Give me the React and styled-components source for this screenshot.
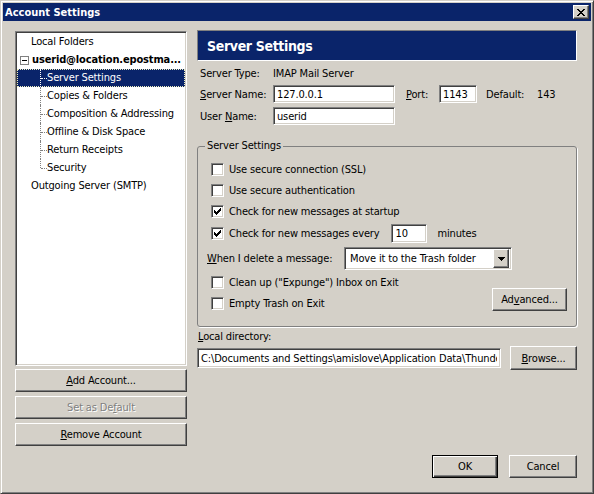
import React from "react";
import styled, { createGlobalStyle, css } from "styled-components";

const GlobalStyle = createGlobalStyle`
  html, body {
    margin: 0;
    padding: 0;
    background: #d4d0c8;
  }
  body {
    font-family: "DejaVu Sans Condensed", "Liberation Sans", Arial, sans-serif;
    font-size: 11px;
    letter-spacing: -0.15px;
    color: #000;
  }
  * {
    box-sizing: border-box;
  }
`;

const NAVY = "#0a246a";

const raised = css`
  border: 1px solid;
  border-color: #fff #404040 #404040 #fff;
  box-shadow: inset -1px -1px #808080, inset 1px 1px #d4d0c8;
`;

const sunken = css`
  border: 1px solid;
  border-color: #808080 #fff #fff #808080;
  box-shadow: inset 1px 1px #404040, inset -1px -1px #d4d0c8;
`;

const Window = styled.div`
  width: 594px;
  height: 494px;
  display: flex;
  flex-direction: column;
  background: #d4d0c8;
  border: 1px solid;
  border-color: #d4d0c8 #404040 #404040 #d4d0c8;
  box-shadow: inset 1px 1px #fff, inset -1px -1px #808080;
  padding: 2px;
`;

const TitleBar = styled.div`
  height: 18px;
  flex-shrink: 0;
  display: flex;
  align-items: center;
  justify-content: space-between;
  padding: 0 2px;
  background: ${NAVY};
  color: #fff;
  font-weight: bold;
  letter-spacing: 0;
`;

const CloseButton = styled.div`
  width: 16px;
  height: 14px;
  display: flex;
  align-items: center;
  justify-content: center;
  background: #d4d0c8;
  ${raised};
`;

const Body = styled.div`
  flex: 1;
  display: flex;
  padding: 9px 14px 13px 12px;
`;

const LeftColumn = styled.div`
  width: 172px;
  display: flex;
  flex-direction: column;
`;

const Tree = styled.div`
  height: 335px;
  margin-top: 1px;
  background: #fff;
  padding: 1px;
  ${sunken};
`;

const TreeRow = styled.div`
  position: relative;
  height: 18px;
  line-height: 18px;
  white-space: nowrap;
  overflow: hidden;
  display: flex;
  align-items: center;
  padding-left: ${(p) => p.indent}px;
  font-weight: ${(p) => (p.bold ? "bold" : "normal")};
  background: ${(p) => (p.selected ? NAVY : "transparent")};
  color: ${(p) => (p.selected ? "#fff" : "#000")};
  outline: ${(p) => (p.selected ? "1px dotted #f0f0c0" : "none")};
  outline-offset: -1px;
`;

const ChildRow = styled(TreeRow)`
  &::before {
    content: "";
    position: absolute;
    left: 23px;
    top: 0;
    height: ${(p) => (p.last ? "9px" : "18px")};
    border-left: 1px dotted ${(p) => (p.selected ? "#fff" : "#808080")};
  }
  &::after {
    content: "";
    position: absolute;
    left: 24px;
    top: 9px;
    width: 6px;
    border-top: 1px dotted ${(p) => (p.selected ? "#fff" : "#808080")};
  }
`;

const Expander = styled.span`
  width: 9px;
  height: 9px;
  margin-right: 3px;
  border: 1px solid #808080;
  background: #fff;
  display: flex;
  align-items: center;
  justify-content: center;
  flex-shrink: 0;

  &::before {
    content: "";
    width: 5px;
    height: 1px;
    background: #000;
  }
`;

const Button = styled.div`
  height: ${(p) => p.h || 23}px;
  width: ${(p) => (p.w ? `${p.w}px` : "auto")};
  display: flex;
  align-items: center;
  justify-content: center;
  background: #d4d0c8;
  color: ${(p) => (p.disabled ? "#808080" : "#000")};
  text-shadow: ${(p) => (p.disabled ? "1px 1px 0 #fff" : "none")};
  ${raised};
  ${(p) =>
    p.primary &&
    css`
      border: 1px solid #000;
      box-shadow: inset 1px 1px #fff, inset -1px -1px #404040,
        inset -2px -2px #808080;
    `}
`;

const SideButton = styled(Button)`
  margin-top: ${(p) => p.gap}px;
`;

const Key = styled.span`
  text-decoration: underline;
  text-underline-offset: 1px;
`;

const RightColumn = styled.div`
  flex: 1;
  margin-left: 10px;
  display: flex;
  flex-direction: column;
`;

const Header = styled.div`
  height: 31px;
  display: flex;
  align-items: center;
  padding-left: 9px;
  background: ${NAVY};
  border: 1px solid;
  border-color: #808080 #fff #fff #808080;
  color: #fff;
  font-size: 14px;
  font-weight: bold;
  letter-spacing: -0.35px;
`;

const InfoRow = styled.div`
  height: 18px;
  margin-top: ${(p) => p.gap}px;
  display: flex;
  align-items: center;
`;

const Label = styled.span`
  width: ${(p) => (p.w ? `${p.w}px` : "auto")};
  margin-left: ${(p) => p.ml || 0}px;
  flex-shrink: 0;
  white-space: nowrap;
`;

const Field = styled.input`
  width: ${(p) => p.w}px;
  height: ${(p) => p.h || 18}px;
  margin-left: ${(p) => p.ml || 0}px;
  padding: 0 3px;
  font: inherit;
  letter-spacing: inherit;
  color: #000;
  background: #fff;
  outline: none;
  flex-shrink: 0;
  ${sunken};
`;

const Group = styled.fieldset`
  margin: 14px 0 0;
  padding: 6px 9px 12px 13px;
  border: 1px solid #808080;
  border-radius: 3px;
  box-shadow: 1px 1px 0 #fff;
  min-width: 0;
`;

const Legend = styled.legend`
  padding: 0 2px;
  margin-left: -6px;
  line-height: 14px;
`;

const CheckRow = styled.div`
  height: ${(p) => p.h || 21}px;
  display: flex;
  align-items: center;
  white-space: nowrap;
`;

const Box = styled.span`
  width: 13px;
  height: 13px;
  margin-right: 5px;
  background: #fff;
  display: flex;
  align-items: center;
  justify-content: center;
  flex-shrink: 0;
  ${sunken};
`;

const SelectRow = styled.div`
  height: 23px;
  margin: 2px 0 0 -4px;
  display: flex;
  align-items: center;
`;

const Select = styled.div`
  width: 168px;
  height: 23px;
  display: flex;
  align-items: center;
  justify-content: space-between;
  padding: 2px;
  padding-left: 5px;
  background: #fff;
  ${sunken};
`;

const DropButton = styled.div`
  width: 16px;
  height: 19px;
  display: flex;
  align-items: center;
  justify-content: center;
  background: #d4d0c8;
  ${raised};
`;

const BottomBlock = styled.div`
  margin-top: 2px;
  display: flex;
  align-items: flex-end;
`;

const CheckColumn = styled.div`
  display: flex;
  flex-direction: column;
`;

const AdvancedButton = styled(Button)`
  margin-left: auto;
  margin-bottom: 3px;
`;

const DirLabel = styled.div`
  height: 14px;
  line-height: 14px;
  margin-top: 3px;
  padding-left: 1px;
`;

const DirRow = styled.div`
  height: 24px;
  margin-top: 2px;
  display: flex;
  align-items: center;
  justify-content: space-between;
`;

const Footer = styled.div`
  margin-top: auto;
  display: flex;
  justify-content: flex-end;
  gap: 11px;
`;

const CheckMark = () => (
  <svg width="7" height="7" viewBox="0 0 7 7" shapeRendering="crispEdges">
    <g fill="#000">
      <rect x="6" y="0" width="1" height="1" />
      <rect x="5" y="1" width="2" height="1" />
      <rect x="0" y="2" width="1" height="1" />
      <rect x="4" y="2" width="3" height="1" />
      <rect x="0" y="3" width="2" height="1" />
      <rect x="3" y="3" width="3" height="1" />
      <rect x="0" y="4" width="5" height="1" />
      <rect x="1" y="5" width="3" height="1" />
      <rect x="2" y="6" width="1" height="1" />
    </g>
  </svg>
);

const CloseIcon = () => (
  <svg width="8" height="7" viewBox="0 0 8 7" shapeRendering="crispEdges">
    <g fill="#000">
      <rect x="0" y="0" width="2" height="1" />
      <rect x="6" y="0" width="2" height="1" />
      <rect x="1" y="1" width="2" height="1" />
      <rect x="5" y="1" width="2" height="1" />
      <rect x="2" y="2" width="4" height="1" />
      <rect x="3" y="3" width="2" height="1" />
      <rect x="2" y="4" width="4" height="1" />
      <rect x="1" y="5" width="2" height="1" />
      <rect x="5" y="5" width="2" height="1" />
      <rect x="0" y="6" width="2" height="1" />
      <rect x="6" y="6" width="2" height="1" />
    </g>
  </svg>
);

const ArrowDown = () => (
  <svg width="7" height="4" viewBox="0 0 7 4" shapeRendering="crispEdges">
    <path d="M0 0h7v1h-1v1h-1v1h-1v1h-1v-1h-1v-1h-1v-1h-1z" fill="#000" />
  </svg>
);

const Check = ({ checked, children, h }) => (
  <CheckRow h={h}>
    <Box>{checked && <CheckMark />}</Box>
    {children}
  </CheckRow>
);

const children = [
  "Server Settings",
  "Copies & Folders",
  "Composition & Addressing",
  "Offline & Disk Space",
  "Return Receipts",
  "Security",
];

const App = () => {
  return (
    <>
      <GlobalStyle />
      <Window>
        <TitleBar>
          <span>Account Settings</span>
          <CloseButton>
            <CloseIcon />
          </CloseButton>
        </TitleBar>

        <Body>
          <LeftColumn>
            <Tree>
              <TreeRow indent={14}>Local Folders</TreeRow>
              <TreeRow indent={3} bold>
                <Expander />
                userid@location.epostma...
              </TreeRow>
              {children.map((name, i) => (
                <ChildRow
                  key={name}
                  indent={30}
                  selected={i === 0}
                  last={i === children.length - 1}
                >
                  {name}
                </ChildRow>
              ))}
              <TreeRow indent={14}>Outgoing Server (SMTP)</TreeRow>
            </Tree>
            <SideButton gap={3}>
              <span>
                <Key>A</Key>dd Account...
              </span>
            </SideButton>
            <SideButton gap={4} disabled>
              <span>
                Set as De<Key>f</Key>ault
              </span>
            </SideButton>
            <SideButton gap={4}>
              <span>
                <Key>R</Key>emove Account
              </span>
            </SideButton>
          </LeftColumn>

          <RightColumn>
            <Header>Server Settings</Header>

            <InfoRow gap={3}>
              <Label w={76}>&nbsp;Server Type:</Label>
              <span>IMAP Mail Server</span>
            </InfoRow>
            <InfoRow gap={3}>
              <Label w={76}>
                &nbsp;<Key>S</Key>erver Name:
              </Label>
              <Field w={122} defaultValue="127.0.0.1" readOnly />
              <Label w={33} ml={11}>
                <Key>P</Key>ort:
              </Label>
              <Field w={38} defaultValue="1143" readOnly />
              <Label w={51} ml={9}>
                Default:
              </Label>
              <span>143</span>
            </InfoRow>
            <InfoRow gap={4}>
              <Label w={76}>
                &nbsp;User <Key>N</Key>ame:
              </Label>
              <Field w={122} defaultValue="userid" readOnly />
            </InfoRow>

            <Group>
              <Legend>Server Settings</Legend>
              <Check>Use secure connection (SSL)</Check>
              <Check>Use secure authentication</Check>
              <Check checked>Check for new messages at startup</Check>
              <Check checked h={23}>
                Check for new messages every
                <Field w={36} h={19} ml={12} defaultValue="10" readOnly />
                <Label ml={10}>minutes</Label>
              </Check>
              <SelectRow>
                <Label w={137}>
                  <Key>W</Key>hen I delete a message:
                </Label>
                <Select>
                  <span>Move it to the Trash folder</span>
                  <DropButton>
                    <ArrowDown />
                  </DropButton>
                </Select>
              </SelectRow>
              <BottomBlock>
                <CheckColumn>
                  <Check>Clean up ("Expunge") Inbox on Exit</Check>
                  <Check>Empty Trash on Exit</Check>
                </CheckColumn>
                <AdvancedButton w={75}>
                  <span>
                    Ad<Key>v</Key>anced...
                  </span>
                </AdvancedButton>
              </BottomBlock>
            </Group>

            <DirLabel>
              <Key>L</Key>ocal directory:
            </DirLabel>
            <DirRow>
              <Field
                w={304}
                h={20}
                defaultValue={
                  "C:\\Documents and Settings\\amislove\\Application Data\\Thunderbird\\Profiles"
                }
                readOnly
              />
              <Button w={67} h={24}>
                <span>
                  <Key>B</Key>rowse...
                </span>
              </Button>
            </DirRow>

            <Footer>
              <Button w={66} primary>
                OK
              </Button>
              <Button w={68}>Cancel</Button>
            </Footer>
          </RightColumn>
        </Body>
      </Window>
    </>
  );
};

export default App;
